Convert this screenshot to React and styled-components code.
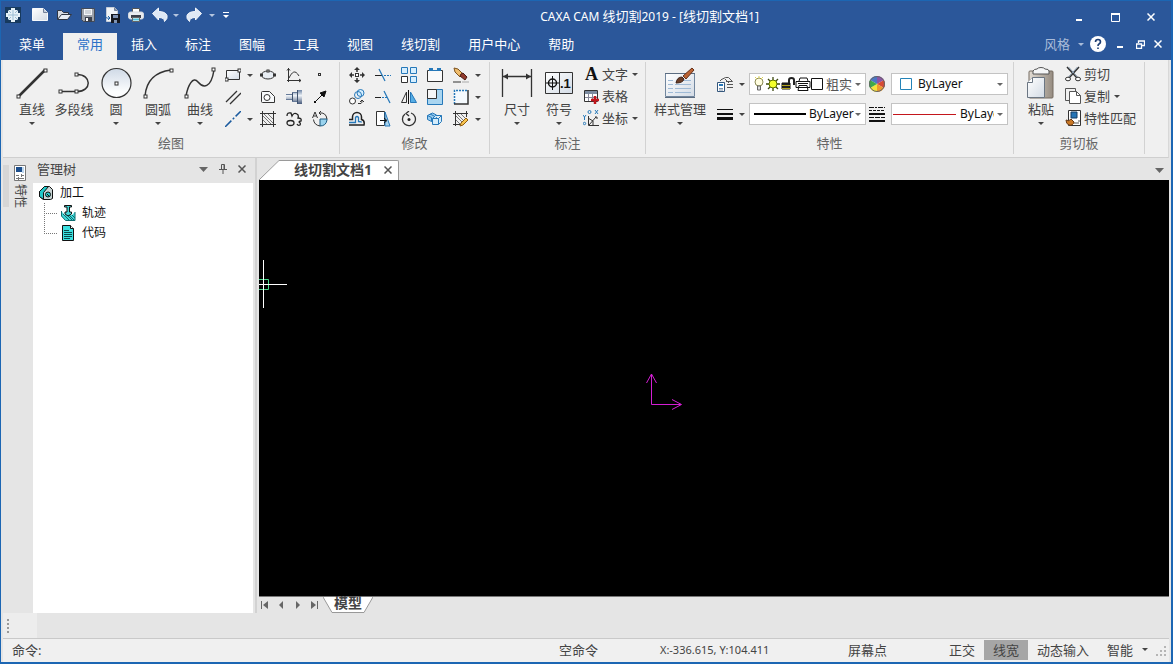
import React from 'react'
import styled, { createGlobalStyle } from 'styled-components'

const GlobalStyle = createGlobalStyle`
  * {
    box-sizing: border-box;
  }

  body {
    margin: 0;
    background: #e5e5e5;
    color: #444;
    font: 13px/20px "Noto Sans", "Noto Sans CJK SC", sans-serif;
  }

  button, input, select {
    font: inherit;
    color: inherit;
    background: none;
    border: 0;
    padding: 0;
    margin: 0;
  }

  svg {
    display: block;
    flex: none;
  }
`

const Frame = styled.div`
  display: flex;
  flex-direction: column;
  min-height: 100vh;
  border: solid #1c66b3;
  border-width: 1px 2px 2px 1px;
`

const Header = styled.header`
  background: #2b579a;
  color: #fff;
`

const TitleBar = styled.div`
  display: flex;
  align-items: center;
  height: 32px;
  padding-right: 2px;
`

const QuickAccess = styled.div`
  display: flex;
  align-items: center;
  width: 237px;
  padding: 0 0 4px 3px;
`

const QuickButton = styled.button`
  display: flex;
  justify-content: center;
  width: ${({ $width }) => $width || 22}px;
`

const Title = styled.h1`
  flex: 1;
  margin: 0;
  padding-bottom: 2px;
  font-size: 12px;
  font-weight: normal;
  text-align: center;
`

const TitleName = styled.span`
  font-size: 13px;
`

const WindowButton = styled.button`
  display: flex;
  justify-content: center;
  width: ${({ $width }) => $width || 36}px;
`

const MenuRow = styled.div`
  display: flex;
  height: 27px;
  padding-left: 4px;
`

const MenuTab = styled.button`
  height: 27px;
  padding: 0 14px 5px;
  margin-right: ${({ $app }) => ($app ? 4 : 0)}px;
  background: ${({ $active }) => ($active ? '#f0f0f0' : 'none')};
  color: ${({ $active }) => ($active ? '#2a72c8' : '#fff')};
`

const MenuRight = styled.div`
  display: flex;
  align-items: center;
  margin-left: auto;
  padding: 0 1px 5px 0;
`

const StyleButton = styled.button`
  display: flex;
  align-items: center;
  gap: 8px;
  margin-right: 6px;
  color: #a9bcd9;
`

const Body = styled.div`
  display: flex;
  flex: 1;
  flex-direction: column;
  padding: 0 2px;
`

const RibbonBar = styled.div`
  display: flex;
  height: 98px;
  background: #f0f0f0;
  border-bottom: 1px solid #cfcfcf;
  border-right: 1px solid #d8d8d8;
`

const GroupBox = styled.section`
  display: flex;
  flex-direction: column;
  width: ${({ $width }) => $width}px;
  margin: 2px 0 3px;
  border-right: 1px solid #d2d2d2;
`

const GroupTools = styled.div`
  display: flex;
  height: 71px;
  padding-left: ${({ $pad }) => $pad}px;
`

const GroupTitle = styled.div`
  color: #666;
  text-align: center;
`

const BigButton = styled.button`
  display: flex;
  flex-direction: column;
  align-items: center;
  width: ${({ $width }) => $width || 42}px;
  padding-top: 5px;
  white-space: nowrap;

  svg + span + svg {
    margin-top: 3px;
  }
`

const ToolGrid = styled.div`
  display: grid;
  grid-template-columns: ${({ $columns }) => $columns};
  grid-auto-rows: 22px;
  padding: 2px 0 0 ${({ $indent }) => $indent || 0}px;
`

const ToolButton = styled.button`
  display: flex;
  align-items: center;
  gap: 6px;
  padding-left: ${({ $pad }) => ($pad === undefined ? 5 : $pad)}px;
`

const TextTool = styled.button`
  display: flex;
  align-items: center;
  gap: 3px;
  padding-bottom: 2px;
  white-space: nowrap;

  span + svg {
    margin-left: 1px;
  }
`

const Properties = styled.div`
  display: grid;
  grid-template-columns: 35px 117px 25px 117px;
  grid-auto-rows: 30px;
  align-items: center;
  padding: 7px 0 0 7px;
`

const Combo = styled.div`
  display: flex;
  align-items: center;
  height: 22px;
  padding: 0 4px 0 ${({ $pad }) => $pad}px;
  background: #fff;
  border: 1px solid #c3c3c3;
`

const ComboSelect = styled.select`
  flex: 1;
  min-width: 0;
  margin: 0 ${({ $trim }) => $trim || 0}px 0 ${({ $gap }) => $gap}px;
  appearance: none;
  color: ${({ $dim }) => ($dim ? '#555' : '#111')};
  font-size: ${({ $dim }) => ($dim ? 13 : 12)}px;
  overflow: hidden;
  text-overflow: clip;
`

const Workspace = styled.main`
  display: flex;
  flex: 1;
`

const Rail = styled.div`
  width: 30px;
  padding-top: 7px;
`

const RailTab = styled.button`
  display: flex;
  flex-direction: column;
  align-items: center;
  gap: 3px;
  width: 28px;
  height: 42px;
  border-left: 6px solid #d6d6d6;
  font-size: 12px;
  white-space: nowrap;

  span {
    width: 24px;
    height: 24px;
    line-height: 24px;
    transform: rotate(90deg);
  }
`

const TreePanel = styled.aside`
  display: flex;
  flex-direction: column;
  width: 220px;
`

const PanelHeader = styled.div`
  display: flex;
  align-items: center;
  height: 25px;
  padding: 0 2px 3px 4px;
`

const PanelTitle = styled.h2`
  flex: 1;
  margin: 0;
  font-size: 13px;
  font-weight: normal;
`

const PanelButton = styled.button`
  display: flex;
  justify-content: center;
  width: 19px;
`

const Tree = styled.ul`
  flex: 1;
  margin: 0;
  padding: 0 0 0 5px;
  list-style: none;
  background: #fff;
  color: #111;
  font-size: 12px;
`

const TreeItem = styled.li`
  display: flex;
  align-items: center;
  gap: 2px;
  height: 20px;
  padding-left: ${({ $child }) => ($child ? 6 : 0)}px;
`

const TreeLabel = styled.span`
  padding-left: 4px;
`

const Splitter = styled.div`
  width: 6px;
  border: solid #e5e5e5;
  border-width: 0 2px;
  background: #d2d2d2;
`

const Document = styled.div`
  display: flex;
  flex: 1;
  flex-direction: column;
`

const DocTabs = styled.div`
  display: flex;
  align-items: flex-end;
  height: 22px;
`

const DocTab = styled.div`
  display: flex;
  align-items: center;
  gap: 12px;
  height: 20px;
  padding: 0 6px 2px 15px;
  background: #fff;
  border: solid #9a9a9a;
  border-width: 1px 1px 0 0;
  border-radius: 0 2px 0 0;
  font-size: 14px;
  font-weight: bold;
`

const DocMenu = styled.button`
  align-self: center;
  margin: 2px 5px 0 auto;
`

const Canvas = styled.div`
  position: relative;
  flex: 1;
  background: #000;
  overflow: hidden;
`

const Crosshair = styled.svg`
  position: absolute;
  left: 0;
  top: 80px;
`

const Origin = styled.svg`
  position: absolute;
  left: 386px;
  top: 193px;
`

const SheetBar = styled.div`
  display: flex;
  height: 17px;
  border-top: 1px solid #777;
`

const SheetNav = styled.button`
  display: flex;
  align-items: center;
  width: 16px;
  padding-left: 1px;
`

const SheetTab = styled.button`
  display: flex;
  height: 16px;
  font-size: 14px;
  line-height: 12px;
  font-weight: bold;

  span {
    height: 16px;
    background: #fff;
    border-bottom: 1px solid #999;
  }
`

const CommandDock = styled.div`
  height: 26px;
  border-bottom: 1px solid #c9c9c9;
`

const DockHandle = styled.div`
  display: flex;
  align-items: center;
  width: 34px;
  height: 25px;
  padding-left: 4px;
  background: #ededed;
`

const StatusBar = styled.footer`
  display: flex;
  align-items: center;
  height: 23px;
  padding-bottom: 2px;
  background: #f0f0f0;
  white-space: nowrap;
`

const CommandLine = styled.label`
  display: flex;
  flex: 1;
  gap: 4px;
  padding-left: 9px;

  input {
    flex: 1;
    min-width: 0;
    outline: none;
  }
`

const StatusText = styled.span`
  width: ${({ $width }) => $width}px;
  font-size: ${({ $small }) => ($small ? 11 : 13)}px;
`

const StatusToggle = styled.button`
  height: 20px;
  padding: 0 9px;
  background: ${({ $on }) => ($on ? '#a6a6a6' : 'none')};
`

const StatusMenu = styled.button`
  display: flex;
  align-items: center;
  gap: 9px;
  padding: 0 8px 0 9px;
`

const Arrow = ({ color = '#444', w = 6 }) => (
  <svg width={w} height={Math.ceil(w / 2)} viewBox="0 0 6 3" preserveAspectRatio="none">
    <path d="M0 0h6L3 3z" fill={color} />
  </svg>
)

const Icon = ({ size = 16, w, h, children }) => (
  <svg width={w || size} height={h || size} viewBox={`0 0 ${w || size} ${h || size}`} fill="none" stroke="#333" aria-hidden="true">
    {children}
  </svg>
)

const Node = ({ x, y, s = 3 }) => (
  <rect x={x - s / 2} y={y - s / 2} width={s} height={s} fill="#fff" stroke="#333" />
)

const CloseX = ({ color = '#fff', s = 8 }) => (
  <svg width={s} height={s} viewBox="0 0 8 8" stroke={color} strokeWidth="1.5" aria-hidden="true">
    <path d="M0.5 0.5l7 7M7.5 0.5l-7 7" />
  </svg>
)

// shared gradients, referenced by id from the icons below
const GradientDefs = styled.svg`
  position: absolute;
`

const Gradients = () => (
  <GradientDefs width="0" height="0" aria-hidden="true">
    <defs>
      <linearGradient id="disc" x1="0" y1="0" x2="0" y2="1">
        <stop offset="0" stopColor="#cfd9e6" />
        <stop offset="0.8" stopColor="#fcfdfe" />
      </linearGradient>
      <linearGradient id="paper" x1="0" y1="0" x2="1" y2="1">
        <stop offset="0" stopColor="#fff" />
        <stop offset="1" stopColor="#d3dbe5" />
      </linearGradient>
      <linearGradient id="clip" x1="0" y1="0" x2="1" y2="0">
        <stop offset="0" stopColor="#e2dcd4" />
        <stop offset="1" stopColor="#958b80" />
      </linearGradient>
      <linearGradient id="steel" x1="0" y1="0" x2="0" y2="1">
        <stop offset="0" stopColor="#6e84a4" />
        <stop offset="0.4" stopColor="#eef3f8" />
        <stop offset="1" stopColor="#46597a" />
      </linearGradient>
    </defs>
  </GradientDefs>
)

const icons = {
  app: (
    <Icon>
      <path d="M0 0h16v16H0z" fill="#173a5e" stroke="none" />
      <path d="M6 1h4v2h2l1 1v2h2v4h-2v2l-1 1h-2v2H6v-2H4l-1-1v-2H1V6h2V4l1-1h2z" fill="#e6f2f8" stroke="none" />
      <path d="M8 3v10M3 8h10M4 4l2 2M12 4l-2 2M4 12l2-2M12 12l-2-2" stroke="#9bbdd2" />
    </Icon>
  ),
  blank: (
    <Icon>
      <path d="M.5 1.5h11l4 4v8H.5z" fill="url(#paper)" stroke="#f8fafc" />
      <path d="M11.5 1.5v4h4" fill="#c2cedc" stroke="#73819a" />
    </Icon>
  ),
  open: (
    <Icon>
      <path d="M1.5 12.5v-9h4l2 2h5v2" fill="#d7dbe1" stroke="#2e3543" />
      <path d="M1.5 12.5l4-5h10l-4 5z" fill="#e9eef4" stroke="#2e3543" />
    </Icon>
  ),
  save: (
    <Icon>
      <path d="M1.5 1.5h13v13h-11l-2-2z" fill="#9da2ab" stroke="#444b58" />
      <path d="M4 2h8v6H4z" fill="#f4f6f8" stroke="none" />
      <path d="M5 4h6M5 6h6" stroke="#aab0b9" />
      <path d="M5 10h7v5H5z" fill="#3b414d" stroke="none" />
      <path d="M6 11h2v3H6z" fill="#fff" stroke="none" />
    </Icon>
  ),
  saveAs: (
    <Icon>
      <path d="M2.5 .5h8l3 3v11h-11z" fill="#f1f4f7" stroke="#c7ced8" />
      <path d="M10.5 .5v3h3" fill="#8795a8" stroke="#73819a" />
      <path d="M1 8q0 4 5 3M4 9l2 2-2 2" stroke="#1d5fa6" />
      <path d="M7 7h9v9H7z" fill="#15181f" stroke="none" />
      <path d="M9 8h5v3H9zM10 13h3v3h-3z" fill="#7f93b4" stroke="none" />
    </Icon>
  ),
  print: (
    <Icon>
      <path d="M4.5 5V1.5h7V5" fill="#fff" stroke="#555" />
      <rect x=".5" y="5" width="15" height="7" rx="2" fill="#e9ecf0" stroke="#d3d8df" />
      <path d="M3 8h10v3H3z" fill="#3b404b" stroke="none" />
      <path d="M4.5 10.5h7v4h-7z" fill="#fff" stroke="#666" />
      <path d="M5 12.5h6" stroke="#4ec2dc" strokeWidth="2" />
    </Icon>
  ),
  undo: (
    <Icon>
      <path d="M.5 6.5L6.5 1v3.500q7 0 8.500 4 1 3-2.500 6 0-4-6-4V13z" fill="#dfe9f5" stroke="#f3f7fc" />
    </Icon>
  ),
  redo: (
    <Icon>
      <path d="M15.5 6.5L9.500 1v3.500q-7 0-8.500 4-1 3 2.500 6 0-4 6-4V13z" fill="#dfe9f5" stroke="#f3f7fc" />
    </Icon>
  ),
  line: (
    <Icon size={32}>
      <path d="M3 29L29 3" strokeWidth="2.500" />
      <Node x={2.5} y={29.5} /><Node x={29.5} y={3.5} />
    </Icon>
  ),
  polyline: (
    <Icon size={32}>
      <path d="M3 24.5h16M19 7.5c15 0 15 17 0 17" strokeWidth="1.500" />
      <Node x={2.5} y={24.5} /><Node x={18.5} y={7.5} /><Node x={18.5} y={24.5} />
    </Icon>
  ),
  circle: (
    <Icon size={32}>
      <circle cx="16.500" cy="16" r="14.500" fill="url(#disc)" strokeWidth="1.200" />
      <Node x={16.5} y={16.5} />
    </Icon>
  ),
  arc: (
    <Icon size={32}>
      <path d="M3 29Q5 6 29 3" strokeWidth="1.500" />
      <Node x={3.5} y={29.5} /><Node x={29.5} y={3.5} />
    </Icon>
  ),
  spline: (
    <Icon size={32}>
      <path d="M2 29C4 18 9 9 14 15S27 22 30 3" strokeWidth="1.500" />
      <Node x={2.5} y={29.5} /><Node x={29.5} y={2.5} />
    </Icon>
  ),
  rect: (
    <Icon>
      <path d="M1.5 3.5h13v9h-13z" fill="url(#paper)" />
      <Node x={1.5} y={12.5} s={3} /><Node x={14.5} y={3.5} s={3} />
    </Icon>
  ),
  ellipse: (
    <Icon>
      <ellipse cx="8" cy="8" rx="6.500" ry="4" fill="#e8edf3" />
      <Node x={1.5} y={8} s={2} /><Node x={14.5} y={8} s={2} /><Node x={8} y={4} s={2} />
    </Icon>
  ),
  curve: (
    <Icon>
      <path d="M2.5 1v14M1 13.5h14M1 3.5l1.500-2 1.500 2M13 12l2 1.500-2 1.500M3 11c3-6 6-9 10-2" />
    </Icon>
  ),
  point: <Icon><rect x="6.500" y="6.500" width="2" height="2" /></Icon>,
  parallel: <Icon><path d="M1 13L12 2M5 15L16 4" strokeWidth="1.300" /></Icon>,
  polygon: (
    <Icon>
      <path d="M1.5 3.5q0-1 1-1h7l5 5v6h-12q-1 0-1-1z" fill="#f7f9fb" />
      <circle cx="7" cy="8.500" r="3" fill="#fff" />
    </Icon>
  ),
  shaft: (
    <Icon>
      <path d="M0 5h6v6H0zM6 3h5v10H6zM11 1h5v14h-5z" fill="url(#steel)" stroke="none" />
      <path d="M6.5 3v10M11.5 1v14" stroke="#3f536f" />
      <path d="M0 5.500h6M0 10.500h6M6 3.500h5M6 12.500h5" stroke="#667a98" />
    </Icon>
  ),
  arrowLine: (
    <Icon>
      <path d="M3 13l8-8" stroke="#111" />
      <path d="M14 2l-2 6-4-4z" fill="#111" stroke="#111" />
      <path d="M2 12h2v2H2z" fill="#111" stroke="none" />
    </Icon>
  ),
  centerLine: (
    <Icon>
      <path d="M0 16L16 0" stroke="#1a5a9e" strokeWidth="1.500" strokeDasharray="9 2 2 2" />
    </Icon>
  ),
  hatch: (
    <Icon>
      <path d="M2.5 0v16M13.5 0v16M0 2.5h16M0 13.5h16" />
      <path d="M3 9l4 4M3 5l8 8M4 3l9 9M8 3l5 5" stroke="#777" />
    </Icon>
  ),
  cloud: (
    <Icon>
      <path d="M1 5q0-4 4-3l1 3q2-4 5-2 2 1 1 4 4 0 3 3-2 0-2 1 2 1 1 3-2 1-3-1" stroke="#222" strokeWidth="1.300" />
      <ellipse cx="4.500" cy="12" rx="3.500" ry="2.500" stroke="#222" strokeWidth="1.300" />
    </Icon>
  ),
  view: (
    <Icon>
      <path d="M8 8h7v1q-1 6-7 6z" fill="#9ad3ee" stroke="#1d5a80" />
      <path d="M7 2q7-1 8 6M8 15Q2 14 1.5 8.500M9 0L7 2l2 2" />
      <path d="M.5 7L3 1l2.500 6M1.5 5h3" />
    </Icon>
  ),
  move: (
    <Icon>
      <path d="M8 2v3M8 11v3M2 8h3M11 8h3" strokeWidth="1.500" />
      <path d="M8 0l3 3H5zM8 16l3-3H5zM0 8l3-3v6zM16 8l-3-3v6z" fill="#333" stroke="none" />
      <rect x="6.500" y="6.500" width="3" height="3" fill="#fff" />
    </Icon>
  ),
  trim: (
    <Icon>
      <path d="M0 8.5h7" stroke="#222" /><path d="M9 8.5h7" stroke="#2678b9" strokeDasharray="2 1" />
      <path d="M4 2l6 12" stroke="#2678b9" strokeWidth="1.300" />
    </Icon>
  ),
  array: (
    <Icon>
      <path d="M.5 .5h6v6h-6z" fill="#d6efff" stroke="#2678b9" />
      <path d="M9.5 .5h6v6h-6z" fill="#d6efff" stroke="#2678b9" />
      <path d="M.5 9.5h6v6h-6z" fill="#fff" />
      <path d="M9.5 9.5h6v6h-6z" fill="#d6efff" stroke="#2678b9" />
    </Icon>
  ),
  stretch: (
    <Icon>
      <path d="M.5 3.5h15v11H.5z" fill="#fafafa" />
      <path d="M2 2.500h4M10 2.500h4" stroke="#2678b9" strokeWidth="3" />
      <path d="M4 3.500h8" stroke="#2678b9" />
    </Icon>
  ),
  erase: (
    <Icon>
      <path d="M1 1l4 1 5 5-3 3-5-5z" fill="#f0bd6c" stroke="#7d5320" />
      <path d="M8 7l2-1 4 4-2 3-5-4z" fill="#913a2c" stroke="#4a1b14" />
      <path d="M0 15h8" stroke="#333" /><path d="M9 15h7" stroke="#aaa" />
    </Icon>
  ),
  copy: (
    <Icon>
      <circle cx="11.500" cy="4" r="3.500" fill="#d6efff" stroke="#2678b9" />
      <circle cx="9" cy="6" r="3.500" stroke="#2678b9" />
      <circle cx="3.500" cy="12" r="3" fill="#fff" />
      <path d="M9 14.5h3q1 0 1-3M11 13l2-2 2 2" />
    </Icon>
  ),
  extend: (
    <Icon>
      <path d="M0 8.5h6" stroke="#222" /><path d="M7 8.5h5" stroke="#2678b9" strokeDasharray="2 1" />
      <path d="M9 2l6 12" stroke="#2678b9" strokeWidth="1.300" />
    </Icon>
  ),
  mirror: (
    <Icon>
      <path d="M7.5 1v14" stroke="#111" /><path d="M5.500 3v10.500h-5z" />
      <path d="M9.5 3v10.500h6z" fill="#57aee5" stroke="#2678b9" />
    </Icon>
  ),
  scale: (
    <Icon>
      <path d="M.5 .5h15v15H.5z" fill="#a9d5f0" stroke="#2678b9" />
      <path d="M.5 .5h9v9h-9z" fill="#f6f6f6" />
    </Icon>
  ),
  breakRect: (
    <Icon>
      <path d="M1 1.5h14.500v13.500H1z" fill="#f4f9fd" stroke="none" />
      <path d="M1.500 15V1.500H15" stroke="#2678b9" strokeWidth="1.500" strokeDasharray="2 1" />
      <path d="M1 15h14V1" strokeWidth="1.500" />
    </Icon>
  ),
  offset: (
    <Icon>
      <path d="M0 8.500h3.500V6a4.500 4.500 0 0 1 9 0v2.500q3.500 1 2.500 5.500H0" stroke="#222" strokeWidth="1.500" />
      <path d="M0 11.500h6.500V6.500q1.500-2 3 0v4q3 0 3 1" stroke="#2678b9" strokeWidth="1.300" />
    </Icon>
  ),
  moveEdge: (
    <Icon>
      <path d="M1.5 .5h8v14h-8z" fill="#fff" />
      <path d="M10 1l5 14h-5z" fill="#a9d5f0" stroke="#2678b9" />
      <path d="M5 9.5h6M9 7l3 2.500L9 12" stroke="#111" />
    </Icon>
  ),
  rotate: (
    <Icon>
      <path d="M4 3a6.500 6.500 0 1 0 6-1M8 0L5 2.500 8 5" strokeWidth="1.300" />
      <circle cx="8" cy="8.500" r="1.500" fill="#222" stroke="none" />
    </Icon>
  ),
  blocks: (
    <Icon>
      <path d="M.5 4.500l5-2.500 4 2v4l-5 2.500-4-2z" fill="#9acdf0" stroke="#2678b9" />
      <path d="M5.500 7.500h6v6h-6zM11.500 7.500l3-3v6l-3 3M5.500 7.500l3-3h6" fill="#d3ecfb" stroke="#2678b9" />
      <path d="M.5 4.500l4 2v4M3 3l4 2" stroke="#2678b9" />
    </Icon>
  ),
  hatchEdit: (
    <Icon>
      <path d="M2.5 0v15M0 2.5h15M13.5 0v6M0 13.5h7" />
      <path d="M3 9l4 4M3 5l6 6M4 3l7 7M8 3l4 4" stroke="#777" />
      <path d="M7 15l1-3 5-5 2 2-5 5z" fill="#f7c44d" stroke="#8d5a10" />
    </Icon>
  ),
  dimension: (
    <Icon size={32}>
      <path d="M1.5 2v28M30.5 2v28M2 9.5h28" strokeWidth="1.300" />
      <path d="M2 9.5l5-3v6zM30 9.5l-5-3v6z" fill="#333" stroke="none" />
    </Icon>
  ),
  symbol: (
    <Icon size={32}>
      <path d="M2.5 5.5h27v21h-27zM16.5 5v22" fill="url(#paper)" />
      <circle cx="9.500" cy="16" r="4" stroke="#111" strokeWidth="1.500" />
      <path d="M9.5 9v14M3 16h13" stroke="#111" />
      <text x="17" y="21" fill="#111" stroke="none" fontSize="13" fontWeight="bold" fontFamily="Liberation Sans, sans-serif">.1</text>
    </Icon>
  ),
  text: (
    <Icon w={16} h={22}>
      <text x="2" y="17" fill="#111" stroke="none" fontSize="18" fontWeight="bold" fontFamily="Liberation Serif, serif">A</text>
    </Icon>
  ),
  table: (
    <Icon>
      <path d="M1.5 2.5h13v11h-13z" fill="#fff" />
      <path d="M2 3h12v3H2z" fill="#7c8ba0" stroke="none" />
      <path d="M2 9.5h12M5.5 6v7M9.5 6v7" stroke="#889" />
      <path d="M12 8v8M8 12h8" stroke="#c0161c" strokeWidth="2.500" />
    </Icon>
  ),
  coordinate: (
    <Icon>
      <path d="M5.5 6v9.500H16M6 15l7-8M12 7h2v2M5 8l5 3v4" />
      <circle cx="6.500" cy="2" r="1.500" stroke="#2678b9" />
      <circle cx="1.500" cy="13.500" r="1.200" stroke="#2678b9" />
      <path d="M0 5l1.500 2L3 5M1.5 7v3M12 0l3 4M15 0l-3 4" stroke="#2678b9" />
    </Icon>
  ),
  styles: (
    <Icon size={32}>
      <path d="M1.5 6.5h29v23h-29z" fill="url(#paper)" stroke="#71869e" />
      <path d="M1 6.5h30M1 30.5h30" stroke="#5b6c80" />
      <path d="M4 13.5h5M4 17.5h5M4 21.5h5M4 25.5h5M11 21.5h16M11 25.5h16M11 17.5h16M18 13.5h9" stroke="#9fbad6" />
      <path d="M12 16q1-6 6-6l2 2q-1 4-8 4z" fill="#6b3d27" stroke="#3c2218" />
      <path d="M19 9l9-8 2 2-8 9z" fill="#bb6232" stroke="#66321a" />
    </Icon>
  ),
  layer: (
    <Icon>
      <path d="M4.500 3.500l4-2h3l4 4H9M3 5l2-2M10 8.500h6M10 11.500h6M8 3l4 4" stroke="#555" />
      <path d="M.5 6.5h7v9h-7z" fill="#fff" stroke="#35577c" />
      <path d="M2 8h4v2H2z" fill="#2678b9" stroke="none" />
      <path d="M2 12.5h4M2 14h4" stroke="#7c92ab" />
    </Icon>
  ),
  lineWidth: (
    <Icon>
      <path d="M0 3.5h16" stroke="#111" /><path d="M0 8h16" stroke="#111" strokeWidth="2" />
      <path d="M0 12.500h16" stroke="#111" strokeWidth="3" />
    </Icon>
  ),
  bulb: (
    <Icon w={12}>
      <circle cx="6" cy="6" r="4" fill="#fffde0" stroke="#8b8a55" />
      <path d="M2 1l2 2M10 1L8 3M6 0v2" stroke="#ddd35b" />
      <path d="M4.5 10h3v4h-3z" fill="#ddd" stroke="#666" />
    </Icon>
  ),
  sun: (
    <Icon>
      <path d="M8 1v14M1 8h14M3 3l10 10M13 3L3 13" stroke="#3c4810" strokeWidth="1.300" />
      <circle cx="8" cy="8" r="4" fill="#f4ff2b" stroke="#5d7000" />
    </Icon>
  ),
  lock: (
    <Icon w={14}>
      <path d="M1 7h8v6H1z" fill="#222" stroke="#111" />
      <path d="M1 9.5h8M1 12.5h8" stroke="#b3a41b" />
      <path d="M8 7V4q0-2 2.500-2T13 4v5" stroke="#222" strokeWidth="2" />
    </Icon>
  ),
  plot: (
    <Icon>
      <path d="M4 5l1-3h7l1 3M1 5.5h14v6H1zM4 9.5h8l1 5H3z" fill="#fff" stroke="#111" />
      <path d="M3 7.5h10" stroke="#111" />
    </Icon>
  ),
  swatch: <Icon w={12}><path d="M.5 2.5h11v11H.5z" fill="#fff" stroke="#111" /></Icon>,
  blueSwatch: <Icon w={12}><path d="M.5 2.5h11v11H.5z" fill="#fff" stroke="#2383b8" /></Icon>,
  blackLine: <Icon w={52}><path d="M0 8h52" stroke="#000" strokeWidth="2" /></Icon>,
  redLine: <Icon w={63}><path d="M0 8.5h63" stroke="#c4161c" /></Icon>,
  color: (
    <Icon>
      <path d="M8 8L8 0A8 8 0 0 0 1 4z" fill="#4b77c5" stroke="none" />
      <path d="M8 8L8 0A8 8 0 0 1 15 4z" fill="#8b55a5" stroke="none" />
      <path d="M8 8L15 4A8 8 0 0 1 15 12z" fill="#d74b35" stroke="none" />
      <path d="M8 8L15 12A8 8 0 0 1 8 16z" fill="#ee9b2d" stroke="none" />
      <path d="M8 8L8 16A8 8 0 0 1 1 12z" fill="#f4e33c" stroke="none" />
      <path d="M8 8L1 12A8 8 0 0 1 1 4z" fill="#3faa49" stroke="none" />
      <circle cx="8" cy="8" r="7.500" stroke="#666" />
    </Icon>
  ),
  lineType: (
    <Icon>
      <path d="M0 1.5h16" stroke="#111" strokeDasharray="5 1 2 1" />
      <path d="M0 4.500h16" stroke="#111" strokeDasharray="3 1" />
      <path d="M0 8h16M0 15h16" stroke="#111" strokeWidth="2" />
      <path d="M0 11.5h16" stroke="#111" strokeDasharray="5 1" />
    </Icon>
  ),
  paste: (
    <Icon size={32}>
      <path d="M5 4h22q1 0 1 1v25q0 1-1 1H5q-1 0-1-1V5q0-1 1-1z" fill="url(#clip)" stroke="#756b60" />
      <path d="M8 7V4q1-2 4-2 1-1.500 4-1.500T20 2q4 0 4 2v3z" fill="#f5f6f7" stroke="#555" />
      <path d="M2.5 15.500l5-5h12v20h-17z" fill="url(#paper)" stroke="#6b7683" />
      <path d="M2.5 15.5h5v-5" fill="#fff" stroke="#6b7683" />
    </Icon>
  ),
  cut: (
    <Icon>
      <path d="M2 1l10 11M14 1L4 12" stroke="#333" strokeWidth="1.500" />
      <path d="M3.500 1l9 10M12.500 1l-9 10" stroke="#8294a6" />
      <ellipse cx="3" cy="13" rx="2.500" ry="1.800" fill="#fff" />
      <ellipse cx="13" cy="13" rx="2.500" ry="1.800" fill="#fff" />
    </Icon>
  ),
  duplicate: (
    <Icon>
      <path d="M10.5 3V.5h-10v12H4" stroke="#555" />
      <path d="M4.5 3.5h7l4 4v8h-11z" fill="#fff" stroke="#555" />
      <path d="M11.5 3.5v4h4" stroke="#555" />
    </Icon>
  ),
  match: (
    <Icon>
      <path d="M3.5 .5h12v15h-12z" fill="#fff" stroke="#333" />
      <path d="M6 2h6v6H6z" fill="#2774b4" stroke="#183f64" />
      <path d="M13 11h2M9 13h5" stroke="#555" />
      <path d="M1 10q3 2 5-1l3 3q-1 4-5 3-3-1-3-5z" fill="#c97826" stroke="#683a16" />
    </Icon>
  ),
  props: (
    <Icon w={12}>
      <path d="M.5 .5h11v15H.5z" fill="#fff" stroke="#777" />
      <path d="M2 2h6v5H2z" fill="#1c4e8c" stroke="none" />
      <path d="M9 2v6" stroke="#7eb0dd" />
      <path d="M2 10.5h3M7 10.5h3M2 13.5h8M7.5 9v3M4.5 12v3" stroke="#777" />
    </Icon>
  ),
  machining: (
    <Icon>
      <path d="M1.5 6.5l5-5h5l3 3v9l-2 1h-7l-4-3z" fill="#c8d4d4" stroke="#111" />
      <path d="M1.5 6.5l5-5h4l-5 6v7l-4-3z" fill="#21c8c8" stroke="#111" />
      <circle cx="10" cy="9.500" r="2.500" fill="#29d0d0" stroke="#111" />
      <path d="M9 9l2 2" stroke="#111" />
    </Icon>
  ),
  track: (
    <Icon>
      <path d="M1 6v5l4 4h10V7l-3 3H5z" fill="#42d8d8" stroke="none" />
      <path d="M1.5 6v5l4 4.500H15V7M3 9l6 6M6 9l6 6M9 10l5 5M12 10l3 3" stroke="#0e6d70" />
      <path d="M4.500 .5h7v1.500H9.500v5h2v2l-3.500 2-3-2V7h2V2H4.500z" fill="#42d8d8" stroke="#111" />
    </Icon>
  ),
  code: (
    <Icon>
      <path d="M2.5 .5h8l3 3v12h-11z" fill="#3be0e0" stroke="#111" />
      <path d="M10.5 .5v3h3" fill="#fff" stroke="#111" />
      <path d="M4 5.5h5M4 7.5h8M4 9.5h8M4 11.5h8M4 13.5h6" stroke="#0b4a4a" />
    </Icon>
  ),
}

const menus = ['菜单', '常用', '插入', '标注', '图幅', '工具', '视图', '线切割', '用户中心', '帮助']

const drawTools = [
  ['rect', '矩形', true], ['ellipse', '椭圆'], ['curve', '公式曲线'], ['point', '点'],
  ['parallel', '平行线'], ['polygon', '孔/轴'], ['shaft', '轴'], ['arrowLine', '箭头'],
  ['centerLine', '中心线', true], ['hatch', '剖面线'], ['cloud', '云线'], ['view', '局部放大'],
]

const modifyTools = [
  ['move', '平移'], ['trim', '裁剪'], ['array', '阵列'], ['stretch', '拉伸'], ['erase', '删除', true],
  ['copy', '平移复制'], ['extend', '延伸'], ['mirror', '镜像'], ['scale', '缩放'], ['breakRect', '打断', true],
  ['offset', '等距线'], ['moveEdge', '过渡'], ['rotate', '旋转'], ['blocks', '分解'], ['hatchEdit', '编辑填充', true],
]

const Group = ({ title, width, pad, children }) => (
  <GroupBox $width={width}>
    <GroupTools $pad={pad}>{children}</GroupTools>
    <GroupTitle>{title}</GroupTitle>
  </GroupBox>
)

const Big = ({ icon, label, width, menu = true }) => (
  <BigButton $width={width}>
    {icons[icon]}
    <span>{label}</span>
    {menu && <Arrow />}
  </BigButton>
)

const Tools = ({ items, columns, pad }) => (
  <ToolGrid $columns={columns}>
    {items.map(([icon, label, menu], i) => (
      <ToolButton key={icon} aria-label={label} title={label} $pad={i % 4 === 0 ? pad : undefined}>
        {icons[icon]}
        {menu && <Arrow />}
      </ToolButton>
    ))}
  </ToolGrid>
)

const Labelled = ({ icon, label, menu }) => (
  <TextTool>
    {icons[icon]}
    <span>{label}</span>
    {menu && <Arrow />}
  </TextTool>
)

const Pick = ({ pad, gap, trim, dim, label, value, children }) => (
  <Combo $pad={pad}>
    {children}
    <ComboSelect $gap={gap} $trim={trim} $dim={dim} aria-label={label} defaultValue={value}>
      <option>{value}</option>
    </ComboSelect>
    <Arrow color="#666" />
  </Combo>
)

const Ribbon = () => (
  <RibbonBar>
    <Group title="绘图" width={337} pad={8}>
      <Big icon="line" label="直线" />
      <Big icon="polyline" label="多段线" menu={false} />
      <Big icon="circle" label="圆" />
      <Big icon="arc" label="圆弧" />
      <Big icon="spline" label="曲线" />
      <Tools items={drawTools} columns="34px 26px 26px 26px" pad={4} />
    </Group>
    <Group title="修改" width={150} pad={4}>
      <Tools items={modifyTools} columns="26px 26px 26px 26px 36px" />
    </Group>
    <Group title="标注" width={156} pad={6}>
      <Big icon="dimension" label="尺寸" />
      <Big icon="symbol" label="符号" />
      <ToolGrid $columns="auto" $indent={3}>
        <Labelled icon="text" label="文字" menu />
        <Labelled icon="table" label="表格" />
        <Labelled icon="coordinate" label="坐标" menu />
      </ToolGrid>
    </Group>
    <Group title="特性" width={368} pad={7}>
      <Big icon="styles" label="样式管理" width={54} />
      <Properties>
        <ToolButton aria-label="图层" $pad={3}>{icons.layer}<Arrow /></ToolButton>
        <Pick pad={3} gap={3} dim label="当前图层" value="粗实">
          {icons.bulb}{icons.sun}{icons.lock}{icons.plot}{icons.swatch}
        </Pick>
        <ToolButton aria-label="颜色" $pad={3}>{icons.color}</ToolButton>
        <Pick pad={8} gap={6} label="当前颜色" value="ByLayer">{icons.blueSwatch}</Pick>
        <ToolButton aria-label="线宽设置" $pad={3}>{icons.lineWidth}<Arrow /></ToolButton>
        <Pick pad={4} gap={3} label="当前线宽" value="ByLayer">{icons.blackLine}</Pick>
        <ToolButton aria-label="线型设置" $pad={3}>{icons.lineType}</ToolButton>
        <Pick pad={1} gap={4} trim={3} label="当前线型" value="ByLayer">{icons.redLine}</Pick>
      </Properties>
    </Group>
    <Group title="剪切板" width={131} pad={6}>
      <Big icon="paste" label="粘贴" />
      <ToolGrid $columns="auto" $indent={3}>
        <Labelled icon="cut" label="剪切" />
        <Labelled icon="duplicate" label="复制" menu />
        <Labelled icon="match" label="特性匹配" />
      </ToolGrid>
    </Group>
  </RibbonBar>
)

const TreeLine = ({ last }) => (
  <svg width="14" height="20" stroke="#777" strokeDasharray="1 1" aria-hidden="true">
    <path d={last ? 'M.5 0v10M0 10.5h14' : 'M.5 0v20M0 10.5h14'} />
  </svg>
)

const navShapes = [
  'M1 0h1v8H1zM8 0L3 4l5 4z',
  'M7 0L3 4l4 4z',
  'M4 0l4 4-4 4z',
  'M3 0l5 4-5 4zM9 0h1v8H9z',
]

const App = () => (
  <Frame>
    <GlobalStyle />
    <Gradients />
    <Header>
      <TitleBar>
        <QuickAccess>
          <QuickButton $width={17} aria-label="CAXA">{icons.app}</QuickButton>
          <QuickButton $width={38} aria-label="新建">{icons.blank}</QuickButton>
          <QuickButton $width={10} aria-label="打开">{icons.open}</QuickButton>
          <QuickButton $width={38} aria-label="保存">{icons.save}</QuickButton>
          <QuickButton $width={10} aria-label="另存为">{icons.saveAs}</QuickButton>
          <QuickButton $width={38} aria-label="打印">{icons.print}</QuickButton>
          <QuickButton $width={10} aria-label="撤销">{icons.undo}</QuickButton>
          <QuickButton aria-label="撤销列表"><Arrow color="#b5c6df" /></QuickButton>
          <QuickButton $width={14} aria-label="重做">{icons.redo}</QuickButton>
          <QuickButton aria-label="重做列表"><Arrow color="#b5c6df" /></QuickButton>
          <QuickButton $width={6} aria-label="自定义">
            <svg width="6" height="6"><path d="M0 0h6v1H0zM0 3h6L3 6z" fill="#fff" /></svg>
          </QuickButton>
        </QuickAccess>
        <Title>
          CAXA CAM <TitleName>线切割</TitleName>2019 - [<TitleName>线切割文档</TitleName>1]
        </Title>
        <WindowButton aria-label="最小化">
          <svg width="6" height="8"><path d="M0 6h6v2H0z" fill="#fff" /></svg>
        </WindowButton>
        <WindowButton aria-label="最大化">
          <svg width="9" height="9" fill="none" stroke="#fff"><path d="M.5 1h8v7.500h-8z" /><path d="M0 1h9" strokeWidth="2" /></svg>
        </WindowButton>
        <WindowButton aria-label="关闭"><CloseX /></WindowButton>
      </TitleBar>
      <MenuRow>
        {menus.map((name, i) => (
          <MenuTab key={name} $app={i === 0} $active={i === 1}>{name}</MenuTab>
        ))}
        <MenuRight>
          <StyleButton>风格<Arrow color="#a9bcd9" /></StyleButton>
          <WindowButton $width={16} aria-label="帮助">
            <svg width="16" height="16">
              <circle cx="8" cy="8" r="8" fill="#fff" />
              <path d="M5.5 6q0-2.500 2.500-2.500T10.500 6Q10.5 7 9 8 8 8.5 8 10M8 11.5v1.500" fill="none" stroke="#1c3d73" strokeWidth="1.600" />
            </svg>
          </WindowButton>
          <WindowButton $width={28} aria-label="最小化文档">
            <svg width="6" height="8"><path d="M0 6h6v2H0z" fill="#fff" /></svg>
          </WindowButton>
          <WindowButton $width={12} aria-label="还原文档">
            <svg width="9" height="9" fill="none" stroke="#fff"><path d="M2.5 3V1h6v4.500H6M.5 4h5v4.500h-5z" strokeWidth="1.300" /></svg>
          </WindowButton>
          <WindowButton $width={24} aria-label="关闭文档"><CloseX /></WindowButton>
        </MenuRight>
      </MenuRow>
    </Header>
    <Body>
      <Ribbon />
      <Workspace>
        <Rail>
          <RailTab>{icons.props}<span>特性</span></RailTab>
        </Rail>
        <TreePanel>
          <PanelHeader>
            <PanelTitle>管理树</PanelTitle>
            <PanelButton aria-label="菜单"><Arrow color="#666" w={9} /></PanelButton>
            <PanelButton aria-label="固定">
              <svg width="8" height="10" fill="none" stroke="#555"><path d="M2.5 .5h3v5h-3zM5 1v5M0 5.5h8M4 6v4" /></svg>
            </PanelButton>
            <PanelButton aria-label="关闭"><CloseX color="#555" /></PanelButton>
          </PanelHeader>
          <Tree>
            <TreeItem>{icons.machining}<TreeLabel>加工</TreeLabel></TreeItem>
            <TreeItem $child><TreeLine />{icons.track}<TreeLabel>轨迹</TreeLabel></TreeItem>
            <TreeItem $child><TreeLine last />{icons.code}<TreeLabel>代码</TreeLabel></TreeItem>
          </Tree>
        </TreePanel>
        <Splitter />
        <Document>
          <DocTabs>
            <svg width="20" height="20"><path d="M0 20L20 0v20z" fill="#fff" /><path d="M0 20L20 .5" stroke="#9a9a9a" /></svg>
            <DocTab>
              线切割文档1
              <button aria-label="关闭标签"><CloseX color="#555" /></button>
            </DocTab>
            <DocMenu aria-label="文档列表"><Arrow color="#666" w={9} /></DocMenu>
          </DocTabs>
          <Canvas>
            <Crosshair width="28" height="48" fill="none">
              <path d="M0 19.5h9.500v10H0" stroke="#49d98b" />
              <path d="M4.5 0v48M0 24.5h28" stroke="#fff" />
            </Crosshair>
            <Origin width="40" height="40" fill="none" stroke="#d41ed4">
              <path d="M6.5 1v30.500H36M1.5 10L6.5 1l5 9M27 26.5l9.500 5-9.500 5" />
            </Origin>
          </Canvas>
          <SheetBar>
            {navShapes.map((d) => (
              <SheetNav key={d} aria-label="翻页">
                <svg width="10" height="8" fill="#666"><path d={d} /></svg>
              </SheetNav>
            ))}
            <SheetTab>
              <svg width="11" height="16"><path d="M0 0h11v15.500H9z" fill="#fff" /><path d="M0 0l9 15.500h2" fill="none" stroke="#999" /></svg>
              <span>模型</span>
              <svg width="11" height="16"><path d="M0 0h11L2 15.500H0z" fill="#fff" /><path d="M11 0L2 15.500H0" fill="none" stroke="#999" /></svg>
            </SheetTab>
          </SheetBar>
        </Document>
      </Workspace>
      <CommandDock>
        <DockHandle>
          <svg width="2" height="14"><path d="M1 0v14" stroke="#999" strokeWidth="2" strokeDasharray="2 2" /></svg>
        </DockHandle>
      </CommandDock>
      <StatusBar>
        <CommandLine>命令:<input /></CommandLine>
        <StatusText $width={101}>空命令</StatusText>
        <StatusText $width={188} $small>X:-336.615, Y:104.411</StatusText>
        <StatusText $width={92}>屏幕点</StatusText>
        <StatusToggle>正交</StatusToggle>
        <StatusToggle $on>线宽</StatusToggle>
        <StatusToggle>动态输入</StatusToggle>
        <StatusMenu>智能<Arrow /></StatusMenu>
        <svg width="13" height="12" fill="#b5b5b5">
          <path d="M8 2h2v2H8zM4 6h2v2H4zM8 6h2v2H8zM0 10h2v2H0zM4 10h2v2H4zM8 10h2v2H8z" />
        </svg>
      </StatusBar>
    </Body>
  </Frame>
)

export default App
